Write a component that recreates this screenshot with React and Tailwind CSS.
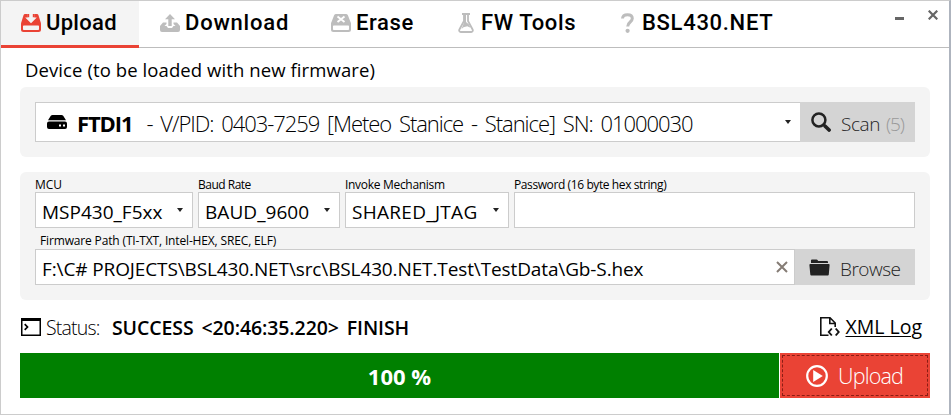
import React from "react";

const UploadTray = () => (
  <svg width="20" height="18" viewBox="0 0 20 18" fill="currentColor">
    <path fillRule="evenodd" d="M4 0h12c.7 0 1.200.4 1.400 1L19.600 8c.3.700.4 1.200.4 2v5.500a2.500 2.500 0 0 1-2.500 2.500h-15A2.500 2.500 0 0 1 0 15.500V10c0-.8.1-1.300.4-2L2.600 1C2.800.4 3.300 0 4 0zM3 11.500c-.6 0-1 .4-1 1v2.500c0 .6.400 1 1 1h14c.6 0 1-.4 1-1v-2.500c0-.6-.4-1-1-1z" />
    <path d="M6.500 0h7v3.500h2.300L10 9.200 4.200 3.500h2.300z" fill="#f4f4f4" />
    <path d="M6.300 0h1.900v3.200H6.300zM11.800 0h1.900v3.200h-1.900z" fill="#ea4335" />
  </svg>
);
const DownloadTray = () => (
  <svg width="20" height="18" viewBox="0 0 20 18" fill="currentColor">
    <path d="M10 0l5 5.300h-3.300V12H8.300V5.300H5z" />
    <path d="M3 8.500h3.500v1.500L4.500 12h2l1.500 2h4l1.500-2h2l-2-2V8.500H17l3 3.500v4a2 2 0 0 1-2 2H2a2 2 0 0 1-2-2v-4z" />
  </svg>
);
const EraseDrive = () => (
  <svg width="20" height="18" viewBox="0 0 20 18" fill="currentColor">
    <path fillRule="evenodd" d="M5 0h10c.8 0 1.500.4 1.900 1.200L19.500 8c.3.500.5 1 .5 1.600v5.900a2.500 2.500 0 0 1-2.500 2.500h-15A2.500 2.500 0 0 1 0 15.500V9.600C0 9 .2 8.500.5 8l2.600-6.800C3.500.4 4.200 0 5 0zM3 11.500c-.6 0-1 .4-1 1v2.500c0 .6.400 1 1 1h14c.6 0 1-.4 1-1v-2.500c0-.6-.4-1-1-1z" />
    <path d="M6.500 2.500l7 5.500m0-5.500l-7 5.500" stroke="#fff" strokeWidth="1.900" />
  </svg>
);
const Flask = () => (
  <svg width="16" height="20" viewBox="0 0 16 20">
    <path d="M4 1h8M6 1v7L1.400 16.500c-.6 1.200 0 2.500 1.400 2.500h10.400c1.400 0 2-1.300 1.400-2.500L10 8V1" fill="none" stroke="currentColor" strokeWidth="1.800" />
    <path d="M6 2h2v7l3 2.500 1.500 3.300-3.200-1.600-3.800 1L3.500 16l2.300-6z" fill="currentColor" />
  </svg>
);
const Question = () => (
  <svg width="13" height="20" viewBox="0 0 13 20">
    <path d="M1.500 5.500C1.700 2.800 3.500 1.700 6.500 1.700c3 0 4.800 1.400 4.800 3.800 0 3.700-4.600 3.400-4.600 8" fill="none" stroke="currentColor" strokeWidth="3" />
    <circle cx="6.600" cy="17.800" r="2.100" fill="currentColor" />
  </svg>
);
const Drive = () => (
  <svg width="20" height="14" viewBox="0 0 20 14">
    <path d="M5.500 0h9q1 0 1.700.8L19 5.200H1L3.800.8Q4.500 0 5.500 0zM2 6.500h16q2 0 2 2V12q0 2-2 2H2q-2 0-2-2V8.500q0-2 2-2z" />
    <path d="M12 9.500h2v2h-2zM16 9.500h2v2h-2z" fill="#fff" />
  </svg>
);
const Magnifier = () => (
  <svg width="20" height="20" viewBox="0 0 20 20" fill="none" stroke="#222">
    <circle cx="7.900" cy="7.900" r="6.500" strokeWidth="2.500" />
    <path d="M12.800 12.800l1.500 1.500" strokeWidth="2.500" />
    <path d="M14.200 14.200l3.900 3.900" strokeWidth="3.600" strokeLinecap="round" />
  </svg>
);
const Folder = () => (
  <svg width="21" height="17" viewBox="0 0 21 17" fill="#222">
    <path d="M2 4V1.500Q2 .500 3 .500h4.500q.9 0 1.200.7l.5.8H18q1 0 1 1v1zM1.300 5h18.400q1 0 .9 1l-.8 9.500q-.1 1-1 1H2.300q-.9 0-1-1L.4 6q-.1-1 .9-1z" />
  </svg>
);
const Terminal = () => (
  <svg width="20" height="18" viewBox="0 0 20 18" fill="none" stroke="#000">
    <path d="M.75 1v16.250h18.500V1" strokeWidth="1.500" />
    <path d="M0 1.500h20" strokeWidth="3" />
    <path d="M3.700 6.200L6.500 9l-2.800 2.800" strokeWidth="1.700" />
  </svg>
);
const XmlFile = () => (
  <svg width="20" height="20" viewBox="0 0 20 20" fill="none" stroke="#111" strokeWidth="1.600">
    <path d="M15.200 10V6L10 .8H.8v17.500h7.700M9.800 1v5.500h5.400" />
    <path d="M11.800 11.500L8.800 15l3 3.500M15.700 11.500l3 3.500-3 3.500" strokeWidth="1.900" />
  </svg>
);
const Play = () => (
  <svg width="22" height="22" viewBox="0 0 22 22">
    <circle cx="11" cy="11" r="9.800" fill="none" stroke="#fff" strokeWidth="2.200" />
    <path d="M7.200 5l9.600 6-9.600 6z" fill="#fff" />
  </svg>
);
const Arrow = () => (
  <svg width="6" height="4" viewBox="0 0 6 4" className="shrink-0">
    <path d="M0 0h6L3 4z" fill="#222" />
  </svg>
);

const tabs = [
  { label: "Upload", icon: <UploadTray />, cls: "w-[138px] pl-[20px] text-[#ea4335]", txt: "ml-[5px] tracking-[0.3px]", active: true },
  { label: "Download", icon: <DownloadTray />, cls: "w-[171px] pl-[21px] text-[#bdbdbd]", txt: "ml-[5px] tracking-[0.8px]" },
  { label: "Erase", icon: <EraseDrive />, cls: "w-[127px] pl-[21px] text-[#bdbdbd]", txt: "ml-[5px] tracking-[0.6px]" },
  { label: "FW Tools", icon: <Flask />, cls: "w-[162px] pl-[21px] text-[#bdbdbd]", txt: "ml-[7px] tracking-[0.6px]" },
  { label: "BSL430.NET", icon: <Question />, cls: "w-[192px] pl-[22px] text-[#bdbdbd]", txt: "ml-[8px] tracking-[0.7px]" },
];

function Select({ label, value, box, txt, labelTxt }) {
  return (
    <div className={box}>
      <div className={`h-[20px] whitespace-nowrap text-[12px] leading-[26px] ${labelTxt}`}>{label}</div>
      <div className="flex h-[36px] items-center justify-between border border-[#ccc] bg-white pl-[6px] pr-[9px]">
        <span className={`mt-[3px] whitespace-nowrap text-[19px] leading-[28px] ${txt}`}>{value}</span>
        <Arrow />
      </div>
    </div>
  );
}

export default function App() {
  return (
    <div className="flex h-[415px] w-[951px] flex-col overflow-hidden border border-[#ccc] border-r-2 border-r-[#aeb4be] bg-white font-['Open_Sans','Noto_Sans',sans-serif] text-black">
      <header className="flex h-[47px] shrink-0 border-b border-[#bdbdbd]">
        {tabs.map((t) => (
          <div key={t.label} className={`flex h-[47px] shrink-0 items-center ${t.cls} ${t.active ? "border-b-3 border-[#ea4335] bg-[#f4f4f4]" : "pb-[3px]"}`}>
            {t.icon}
            <span className={`whitespace-nowrap font-['Roboto',sans-serif] text-[22px] font-medium leading-[26px] text-black ${t.txt}`}>{t.label}</span>
          </div>
        ))}
        <div className="ml-auto flex pr-[11px]">
          <div className="mr-[24px] mt-[16px] h-[3px] w-[9px] bg-[#666]" />
          <svg className="mt-[9px]" width="10" height="10" viewBox="0 0 10 10" stroke="#666" strokeWidth="2.200">
            <path d="M.7.7l8.600 8.600M9.300.7L.7 9.300" />
          </svg>
        </div>
      </header>

      <div className="flex flex-col pl-[19px]">
        <div className="h-[39px] whitespace-nowrap pl-[5px] pt-[8px] text-[18.500px] leading-[28px] tracking-[0.090px]">
          Device (to be loaded with new firmware)
        </div>
        <section className="flex h-[70px] w-[910px] rounded-[6px] bg-[#f4f4f4] p-[15px]">
          <div className="flex h-[40px] w-[766px] items-center justify-between whitespace-nowrap border border-[#ccc] bg-white pl-[11px] pr-[9px]">
            <div className="flex items-center">
              <Drive />
              <span className="ml-[10px] mt-px text-[22px] font-bold leading-[30px] tracking-[-1.100px]">FTDI1</span>
              <span className="ml-[14px] mt-px text-[22px] font-light leading-[30px] tracking-[-1.060px] [word-spacing:3.200px]">- V/PID: 0403-7259 [Meteo Stanice - Stanice] SN: 01000030</span>
            </div>
            <Arrow />
          </div>
          <button className="-ml-px flex h-[40px] w-[115px] items-center whitespace-nowrap bg-[#d4d4d4] pl-[11px] text-left text-[19px] font-light text-[#222]">
            <Magnifier />
            <span className="ml-[10px] mt-[4px] tracking-[-0.4px]">Scan</span>
            <span className="ml-[6px] mt-[4px] tracking-[-1.200px] text-[#999]">(5)</span>
          </button>
        </section>

        <section className="mt-[15px] h-[128px] w-[910px] rounded-[6px] bg-[#f4f4f4] px-[15px]">
          <div className="flex gap-[5px]">
            <Select label="MCU" value="MSP430_F5xx" box="w-[158px]" txt="tracking-[0px]" labelTxt="tracking-[0px]" />
            <Select label="Baud Rate" value="BAUD_9600" box="w-[142px]" txt="tracking-[0.050px]" labelTxt="tracking-[-0.500px]" />
            <Select label="Invoke Mechanism" value="SHARED_JTAG" box="w-[164px]" txt="tracking-[0.3px]" labelTxt="tracking-[-0.3px]" />
            <div className="w-[401px]">
              <div className="h-[20px] whitespace-nowrap text-[12px] leading-[26px] tracking-[-0.4px]">Password (16 byte hex string)</div>
              <div className="h-[36px] border border-[#ccc] bg-white" />
            </div>
          </div>
          <div className="h-[21px] pl-[5px] text-[12px] leading-[25px] tracking-[-0.150px]">Firmware Path (TI-TXT, Intel-HEX, SREC, ELF)</div>
          <div className="flex">
            <div className="flex h-[36px] w-[760px] items-center justify-between whitespace-nowrap border border-[#ccc] bg-white pl-[6px] pr-[6px]">
              <span className="mt-[3px] text-[19px] leading-[28px] tracking-[-0.120px]">{"F:\\C# PROJECTS\\BSL430.NET\\src\\BSL430.NET.Test\\TestData\\Gb-S.hex"}</span>
              <svg width="12" height="12" viewBox="0 0 12 12" stroke="#857c75" strokeWidth="2">
                <path d="M1 1l10 10M11 1L1 11" />
              </svg>
            </div>
            <button className="flex h-[36px] w-[120px] items-center bg-[#d4d4d4] pl-[14px] text-[19px] font-light text-[#222]">
              <Folder />
              <span className="ml-[10px] mt-[4px] tracking-[-0.5px]">Browse</span>
            </button>
          </div>
        </section>

        <div className="flex h-[53px] w-[910px] items-center whitespace-nowrap pl-px pr-[8px] text-[19.500px]">
          <Terminal />
          <span className="ml-[5px] mt-[2px] w-[55px] font-light tracking-[-0.800px]">Status:</span>
          <span className="ml-[11px] mt-[2px] font-semibold tracking-[-0.100px] [word-spacing:3px]">SUCCESS &lt;20:46:35.220&gt; FINISH</span>
          <span className="ml-auto"><XmlFile /></span>
          <a className="ml-[5px] mt-px underline decoration-1 underline-offset-2 tracking-[0px]">XML Log</a>
        </div>

        <div className="flex h-[45px] w-[910px] gap-px">
          <div className="flex w-[759px] items-center justify-center bg-[#008000] pt-px text-[22px] font-bold text-white">100 %</div>
          <button className="w-[150px] bg-[#ea4335] p-[2px] text-white">
            <span className="flex h-full items-center border border-dashed border-[#8b1d14] pl-[23px]">
              <Play />
              <span className="ml-[10px] mt-[1px] text-[21.500px] font-light leading-[28px] tracking-[-0.8px]">Upload</span>
            </span>
          </button>
        </div>
      </div>
    </div>
  );
}
